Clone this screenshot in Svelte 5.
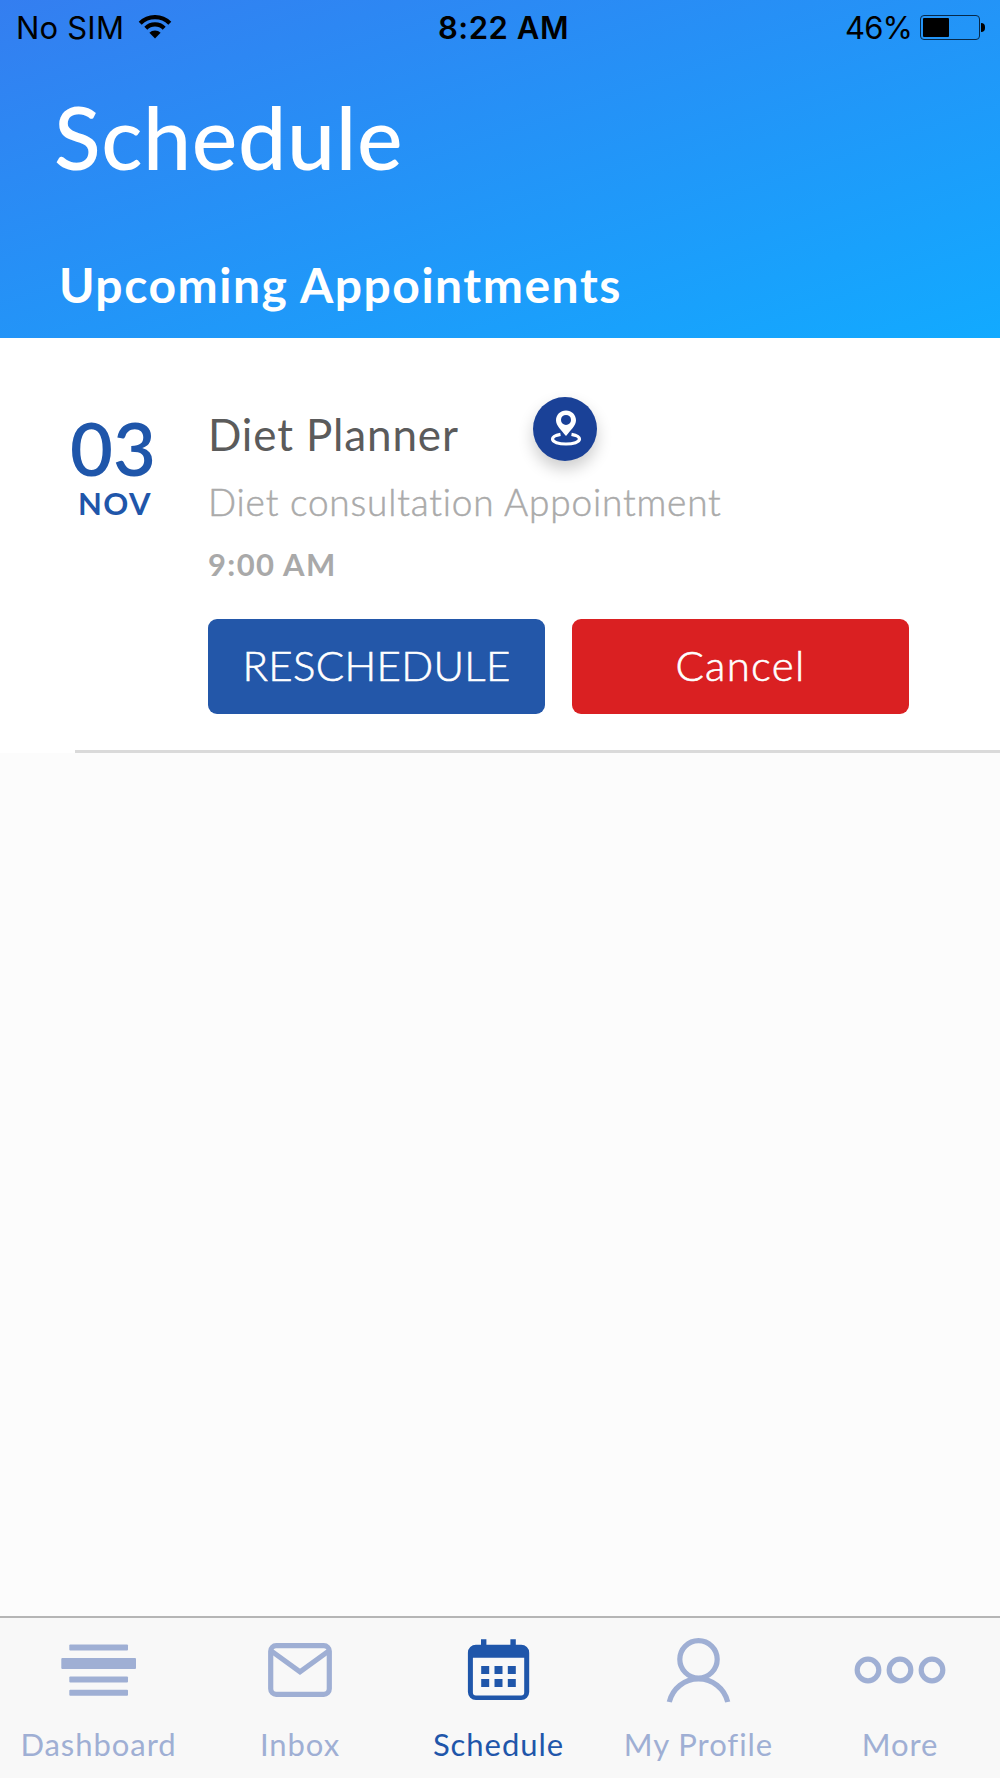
<script lang="ts">
  interface Appointment {
    id: number;
    day: string;
    month: string;
    title: string;
    description: string;
    time: string;
  }

  const battery = 46;

  const tabs = ['Dashboard', 'Inbox', 'Schedule', 'My Profile', 'More'];
  let activeTab = $state('Schedule');

  let appointments = $state<Appointment[]>([
    {
      id: 1,
      day: '03',
      month: 'NOV',
      title: 'Diet Planner',
      description: 'Diet consultation Appointment',
      time: '9:00 AM',
    },
  ]);

  function cancel(id: number) {
    appointments = appointments.filter((a) => a.id !== id);
  }
</script>

<div class="screen">
  <header class="header">
    <div class="status-bar">
      <div class="carrier">
        <span>No SIM</span>
        <svg class="wifi" viewBox="0 0 34 24" width="34" height="24">
          <path d="M2.2 8.2a21 21 0 0 1 29.6 0M7.8 13.2a13 13 0 0 1 18.4 0" />
          <path class="dot" d="M17 23.500l-5.600-5.700a8 8 0 0 1 11.200 0z" />
        </svg>
      </div>
      <span class="clock">8:22 AM</span>
      <div class="power">
        <span class="percent">{battery}%</span>
        <div class="battery">
          <div class="level" style="width: {battery}%"></div>
        </div>
        <div class="nub"></div>
      </div>
    </div>
    <h1>Schedule</h1>
    <h2>Upcoming Appointments</h2>
  </header>

  <main class="list">
    {#each appointments as item (item.id)}
      <article class="item">
        <div class="date">
          <span class="day">{item.day}</span>
          <span class="month">{item.month}</span>
        </div>
        <div class="details">
          <div class="title-row">
            <h3>{item.title}</h3>
            <button class="location" aria-label="Location">
              <svg viewBox="0 0 64 64" width="64" height="64">
                <path
                  class="ring"
                  d="M27.500 37.300c-4.700.8-8 2.600-8 4.800 0 2.900 6.100 4.900 13.500 4.900s13.500-2 13.500-4.900c0-2.200-3.300-4-8-4.800"
                />
                <path
                  class="pin"
                  d="M33 13.400c-5.700 0-10 4.300-10 9.800 0 5.300 5.300 9.900 10 15.800 4.700-5.900 10-10.500 10-15.800 0-5.500-4.300-9.800-10-9.800zm0 4.500a5 5 0 1 1 0 10 5 5 0 0 1 0-10z"
                />
              </svg>
            </button>
          </div>
          <p class="description">{item.description}</p>
          <p class="time">{item.time}</p>
          <div class="actions">
            <button class="btn reschedule">RESCHEDULE</button>
            <button class="btn cancel" onclick={() => cancel(item.id)}>Cancel</button>
          </div>
        </div>
      </article>
    {/each}
  </main>

  <nav class="tab-bar">
    {#each tabs as tab (tab)}
      <button class="tab" class:active={tab === activeTab} onclick={() => (activeTab = tab)}>
        <svg viewBox="0 0 100 70" width="100" height="70">
          {#if tab === 'Dashboard'}
            <g class="solid">
              <rect x="20.300" y="9.500" width="58.700" height="6" rx="1" />
              <rect x="12.300" y="23" width="74.700" height="11" rx="1" />
              <rect x="20.300" y="41.500" width="58.700" height="6" rx="1" />
              <rect x="20.300" y="54.800" width="58.700" height="6" rx="1" />
            </g>
          {:else if tab === 'Inbox'}
            <rect x="20.700" y="10.700" width="58.600" height="48.600" rx="5.500" />
            <path d="M22 16.500l28 20.300 28-20.300" />
          {:else if tab === 'Schedule'}
            <g class="solid" transform="translate(-0.8 0)">
              <path
                fill-rule="evenodd"
                d="M27 9.700h5.800V4.200h5.400v5.500h24V4.200h5.400v5.500H73a8 8 0 0 1 8 8V57a8 8 0 0 1-8 8H27.700a8 8 0 0 1-8-8V17.700a8 8 0 0 1 8-8zM24.700 22.700V57.500a3 3 0 0 0 3 3H73a3 3 0 0 0 3-3V22.700z"
              />
              {#each [31, 44] as y}
                {#each [33, 46.3, 59.6] as x}
                  <rect {x} {y} width="8" height="8" />
                {/each}
              {/each}
            </g>
          {:else if tab === 'My Profile'}
            <circle cx="49.500" cy="24.300" r="18.700" />
            <path d="M20.300 67a30 30 0 0 1 58.400 0" />
          {:else}
            <circle cx="18" cy="35" r="10.800" />
            <circle cx="50" cy="35" r="10.800" />
            <circle cx="82" cy="35" r="10.800" />
          {/if}
        </svg>
        <span>{tab}</span>
      </button>
    {/each}
  </nav>
</div>

<style>
  :global(body) {
    margin: 0;
  }

  .screen {
    display: flex;
    flex-direction: column;
    width: 1000px;
    height: 1778px;
    background: #fcfcfc;
    font-family: Lato, 'Open Sans', sans-serif;
    overflow: hidden;
  }

  h1,
  h2,
  h3,
  p {
    margin: 0;
  }

  button {
    padding: 0;
    border: 0;
    font-family: inherit;
    cursor: pointer;
  }

  .header {
    box-sizing: border-box;
    height: 338px;
    background: linear-gradient(to bottom right, #347ef0, #12aaff);
    color: #fff;
  }

  .status-bar {
    display: grid;
    grid-template-columns: 1fr auto 1fr;
    align-items: center;
    height: 56px;
    padding: 0 15px 0 16px;
    font-family: Inter, 'Liberation Sans', sans-serif;
    font-size: 31px;
    line-height: 56px;
    letter-spacing: 0.2px;
    color: #000;
  }

  .carrier,
  .power {
    display: flex;
    align-items: center;
  }

  .power {
    justify-content: flex-end;
  }

  .percent {
    margin-right: 8px;
    letter-spacing: -0.9px;
  }

  .clock {
    margin-left: 6px;
    font-weight: 600;
    letter-spacing: 0.55px;
  }

  .wifi {
    margin-left: 14px;
    margin-bottom: 3px;
    fill: none;
    stroke: #000;
    stroke-width: 4.2;
  }

  .wifi .dot {
    fill: #000;
    stroke: none;
  }

  .battery {
    box-sizing: border-box;
    width: 60px;
    height: 25px;
    margin-bottom: 1px;
    padding: 2px 0 2px 2px;
    border: 1px solid #06294a;
    border-radius: 4px;
  }

  .level {
    height: 19px;
    border-radius: 1px;
    background: #000;
  }

  .nub {
    width: 4px;
    height: 9px;
    margin-left: 1px;
    margin-bottom: 1px;
    border-radius: 0 4px 4px 0;
    background: #000;
  }

  h1 {
    margin: 31px 0 0 54px;
    font-size: 86px;
    font-weight: 500;
    line-height: 100px;
    letter-spacing: 0.65px;
  }

  h2 {
    margin: 68px 0 0 59px;
    font-size: 48px;
    font-weight: 700;
    line-height: 60px;
    letter-spacing: 1.52px;
  }

  .list {
    flex: 1;
  }

  .item {
    display: flex;
    box-sizing: border-box;
    height: 415px;
    padding-top: 69px;
    background:
      linear-gradient(#dadada, #dadada) 75px 100% / 100% 3px no-repeat,
      #fff;
  }

  .date {
    display: flex;
    flex-direction: column;
    width: 208px;
    padding-top: 4px;
    color: #1f56aa;
  }

  .day {
    margin-left: 70px;
    font-size: 74px;
    font-weight: 600;
    line-height: 74px;
  }

  .month {
    margin: 0 0 0 78px;
    font-size: 31px;
    font-weight: 700;
    line-height: 36px;
    letter-spacing: 1.4px;
  }

  .title-row {
    display: flex;
    height: 54px;
  }

  h3 {
    width: 325px;
    font-size: 44px;
    font-weight: 400;
    line-height: 54px;
    letter-spacing: 0.85px;
    color: #5b5b5b;
  }

  .location {
    width: 64px;
    height: 64px;
    margin-top: -10px;
    border-radius: 50%;
    background: #1a4197;
    box-shadow: 0 8px 16px rgba(0, 0, 0, 0.2);
  }

  .location svg {
    display: block;
  }

  .ring {
    fill: none;
    stroke: #fff;
    stroke-width: 3.2;
  }

  .pin {
    fill: #fff;
    fill-rule: evenodd;
  }

  .description {
    margin-top: 19px;
    font-size: 37px;
    font-weight: 300;
    line-height: 44px;
    letter-spacing: 0.82px;
    color: #aaa;
    -webkit-text-stroke: 0.5px #aaa;
  }

  .time {
    margin-top: 22px;
    font-size: 31px;
    font-weight: 700;
    line-height: 36px;
    letter-spacing: 1.34px;
    color: #a9a9a9;
  }

  .actions {
    display: flex;
    gap: 27px;
    margin-top: 37px;
  }

  .btn {
    width: 337px;
    height: 95px;
    padding-bottom: 4px;
    border-radius: 9px;
    color: #fff;
    font-size: 42px;
    font-weight: 300;
    line-height: 90px;
    letter-spacing: 0.33px;
    -webkit-text-stroke: 0.6px #fff;
  }

  .reschedule {
    background: #2357a9;
  }

  .btn.cancel {
    background: #da2022;
    letter-spacing: 1.3px;
  }

  .tab-bar {
    display: grid;
    grid-template-columns: 197px 206px 191px 209px 194px;
    box-sizing: border-box;
    height: 162px;
    border-top: 2px solid #b5b5b5;
    background: #f8f8f8;
  }

  .tab {
    display: flex;
    flex-direction: column;
    align-items: center;
    gap: 21px;
    padding-top: 17px;
    background: none;
    color: #9fafd4;
    font-size: 31px;
    line-height: 36px;
    letter-spacing: 0.95px;
    white-space: nowrap;
  }

  .tab svg {
    flex: none;
    fill: none;
    stroke: currentColor;
    stroke-width: 5.2;
  }

  .tab .solid {
    fill: currentColor;
    stroke: none;
  }

  .tab.active {
    color: #1f56aa;
  }
</style>
